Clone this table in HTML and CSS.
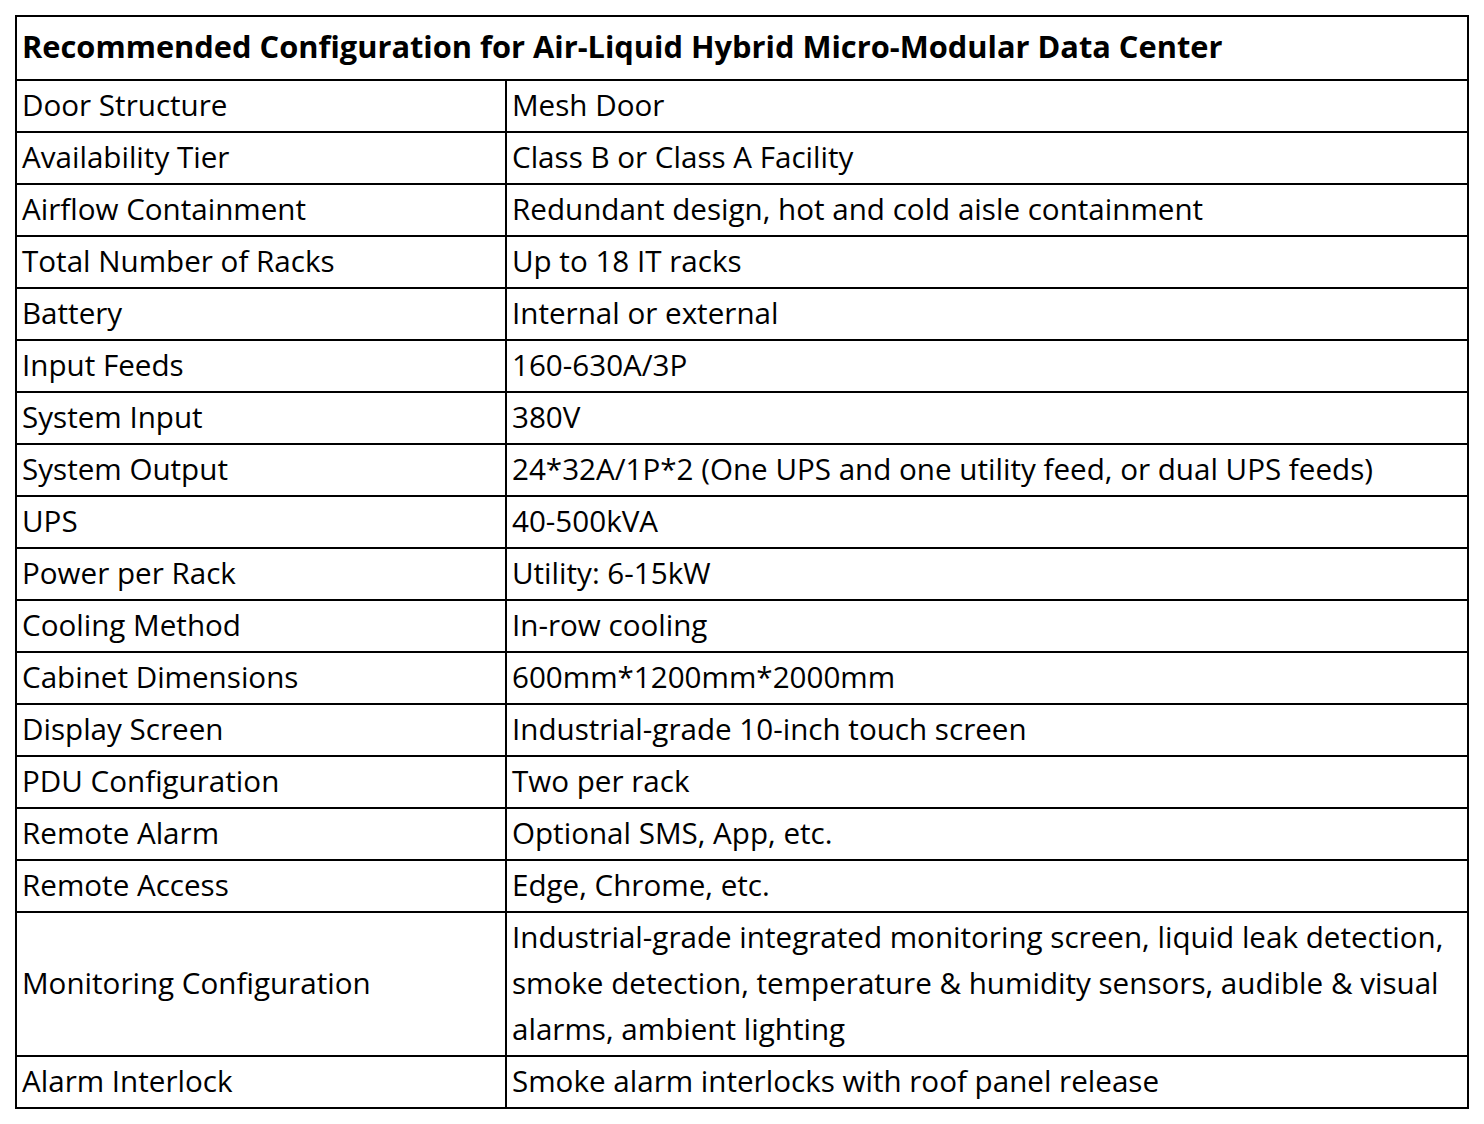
FILE: index.html
```html
<!DOCTYPE html>
<html>
<head>
<meta charset="utf-8">
<link rel="stylesheet" href="styles.css">
</head>
<body>
<div class="page">
<table class="spec">
<colgroup><col class="c1"><col class="c2"></colgroup>
<thead>
<tr><th colspan="2">Recommended Configuration for Air-Liquid Hybrid Micro-Modular Data Center</th></tr>
</thead>
<tbody>
<tr><td>Door Structure</td><td>Mesh Door</td></tr>
<tr><td>Availability Tier</td><td>Class B or Class A Facility</td></tr>
<tr><td>Airflow Containment</td><td>Redundant design, hot and cold aisle containment</td></tr>
<tr><td>Total Number of Racks</td><td>Up to 18 IT racks</td></tr>
<tr><td>Battery</td><td>Internal or external</td></tr>
<tr><td>Input Feeds</td><td>160-630A/3P</td></tr>
<tr><td>System Input</td><td>380V</td></tr>
<tr><td>System Output</td><td>24*32A/1P*2 (One UPS and one utility feed, or dual UPS feeds)</td></tr>
<tr><td>UPS</td><td>40-500kVA</td></tr>
<tr><td>Power per Rack</td><td>Utility: 6-15kW</td></tr>
<tr><td>Cooling Method</td><td>In-row cooling</td></tr>
<tr><td>Cabinet Dimensions</td><td>600mm*1200mm*2000mm</td></tr>
<tr><td>Display Screen</td><td>Industrial-grade 10-inch touch screen</td></tr>
<tr><td>PDU Configuration</td><td>Two per rack</td></tr>
<tr><td>Remote Alarm</td><td>Optional SMS, App, etc.</td></tr>
<tr><td>Remote Access</td><td>Edge, Chrome, etc.</td></tr>
<tr><td>Monitoring Configuration</td><td>Industrial-grade integrated monitoring screen, liquid leak detection, smoke detection, temperature &amp; humidity sensors, audible &amp; visual alarms, ambient lighting</td></tr>
<tr><td>Alarm Interlock</td><td>Smoke alarm interlocks with roof panel release</td></tr>
</tbody>
</table>
</div>
</body>
</html>
```

FILE: styles.css
```css
html, body {
  margin: 0;
  padding: 0;
  background: #ffffff;
}

.page {
  padding: 15px;
}

.spec {
  border-collapse: collapse;
  table-layout: fixed;
  width: 1454px;
  font-family: "Open Sans", "Noto Sans", sans-serif;
  font-size: 29.6px;
  color: #000000;
}

.c1 { width: 490px; }
.c2 { width: auto; }

.spec th,
.spec td {
  border: 2px solid #000000;
  padding: 2px 5px;
  line-height: 46px;
  text-align: left;
  vertical-align: middle;
}

.spec td {
  padding-top: 1px;
  padding-bottom: 3px;
}

.spec th {
  font-weight: 700;
  font-size: 30.8px;
  padding-top: 6px;
  padding-bottom: 10px;
}
```
